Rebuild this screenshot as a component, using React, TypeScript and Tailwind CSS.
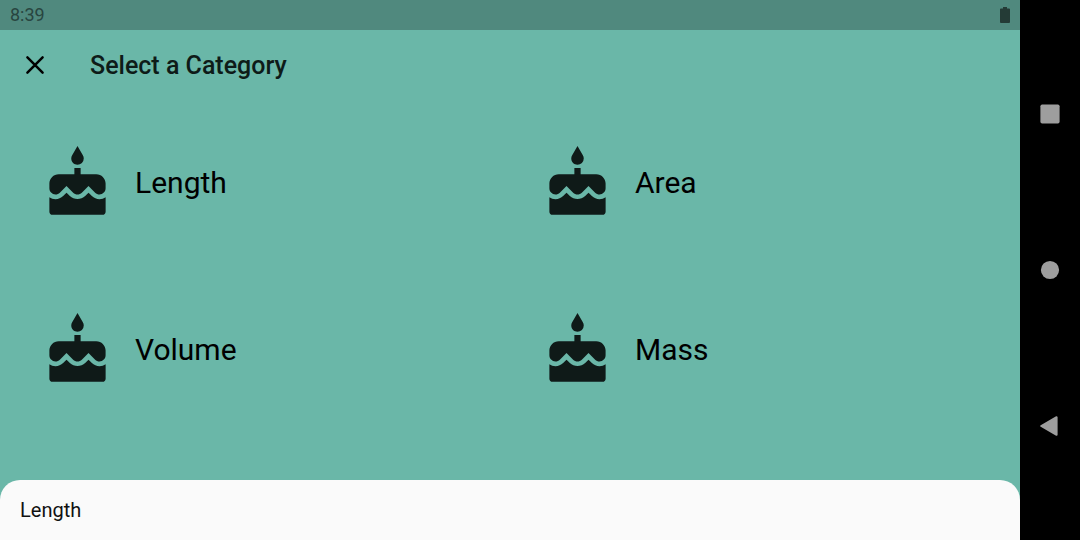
import React from "react";
import { MdCake } from "react-icons/md";

const categories = ["Length", "Area", "Volume", "Mass"];

function CategoryButton({ name }: { name: string }) {
  return (
    <button type="button" className="flex h-[100px] items-center px-[30px] text-left text-[30px] leading-10 text-black">
      <MdCake aria-hidden="true" className="size-[75px] shrink-0 text-[#0f1a18]" />
      <span className="ml-5">{name}</span>
    </button>
  );
}

function NavigationBar() {
  return (
    <nav aria-label="System navigation" className="flex w-[60px] shrink-0 flex-col items-center justify-around bg-black py-9 text-[#9e9e9e]">
      <button type="button" aria-label="Recent apps">
        <svg viewBox="0 0 20 20" className="size-5" fill="currentColor"><rect x="0.4" y="0.4" width="19.2" height="19.2" rx="1.8" /></svg>
      </button>
      <button type="button" aria-label="Home">
        <svg viewBox="0 0 20 20" className="size-5" fill="currentColor"><circle cx="10" cy="10" r="9.1" /></svg>
      </button>
      <button type="button" aria-label="Back">
        <svg viewBox="0 0 20 20" className="size-5" fill="currentColor" stroke="currentColor" strokeWidth="2" strokeLinejoin="round"><path d="M1.2 10 16.6 1.2V18.8Z" /></svg>
      </button>
    </nav>
  );
}

export default function App() {
  return (
    <div className="flex min-h-screen bg-[#6ab7a8] font-['Roboto',sans-serif]">
      <div className="flex min-w-0 flex-1 flex-col">
        <div className="flex h-[30px] items-center justify-between bg-[#50897e] px-[10px] text-[#284540]">
          <span className="text-[18px] leading-none">8:39</span>
          <svg role="img" aria-label="Battery full" viewBox="0 0 10 16" className="h-4 w-[10px]" fill="#243b36">
            <path d="M3 0h4v1.4h2.1q.9 0 .9.9v12.8q0 .9-.9.9H.9q-.9 0-.9-.9V2.3q0-.9.9-.9H3Z" />
          </svg>
        </div>
        <header className="flex h-[70px] items-center px-5 text-[#0e1b18]">
          <button type="button" aria-label="Close">
            <svg viewBox="0 0 30 30" className="size-[30px]" fill="none" stroke="#000" strokeWidth="2.5" strokeLinecap="round">
              <path d="m7.4 7.4 15.2 15.2M22.6 7.4 7.4 22.6" />
            </svg>
          </button>
          <h1 className="ml-10 text-[25px] leading-none font-medium">Select a Category</h1>
        </header>
        <main className="grid flex-1 grid-cols-2 content-start gap-y-[67px] px-[10px] pt-[33px]">
          {categories.map((name) => <CategoryButton key={name} name={name} />)}
        </main>
        <footer className="flex h-[60px] items-center rounded-t-[20px] bg-[#fafafa] px-5 text-[20px] text-[#111]">
          Length
        </footer>
      </div>
      <NavigationBar />
    </div>
  );
}
